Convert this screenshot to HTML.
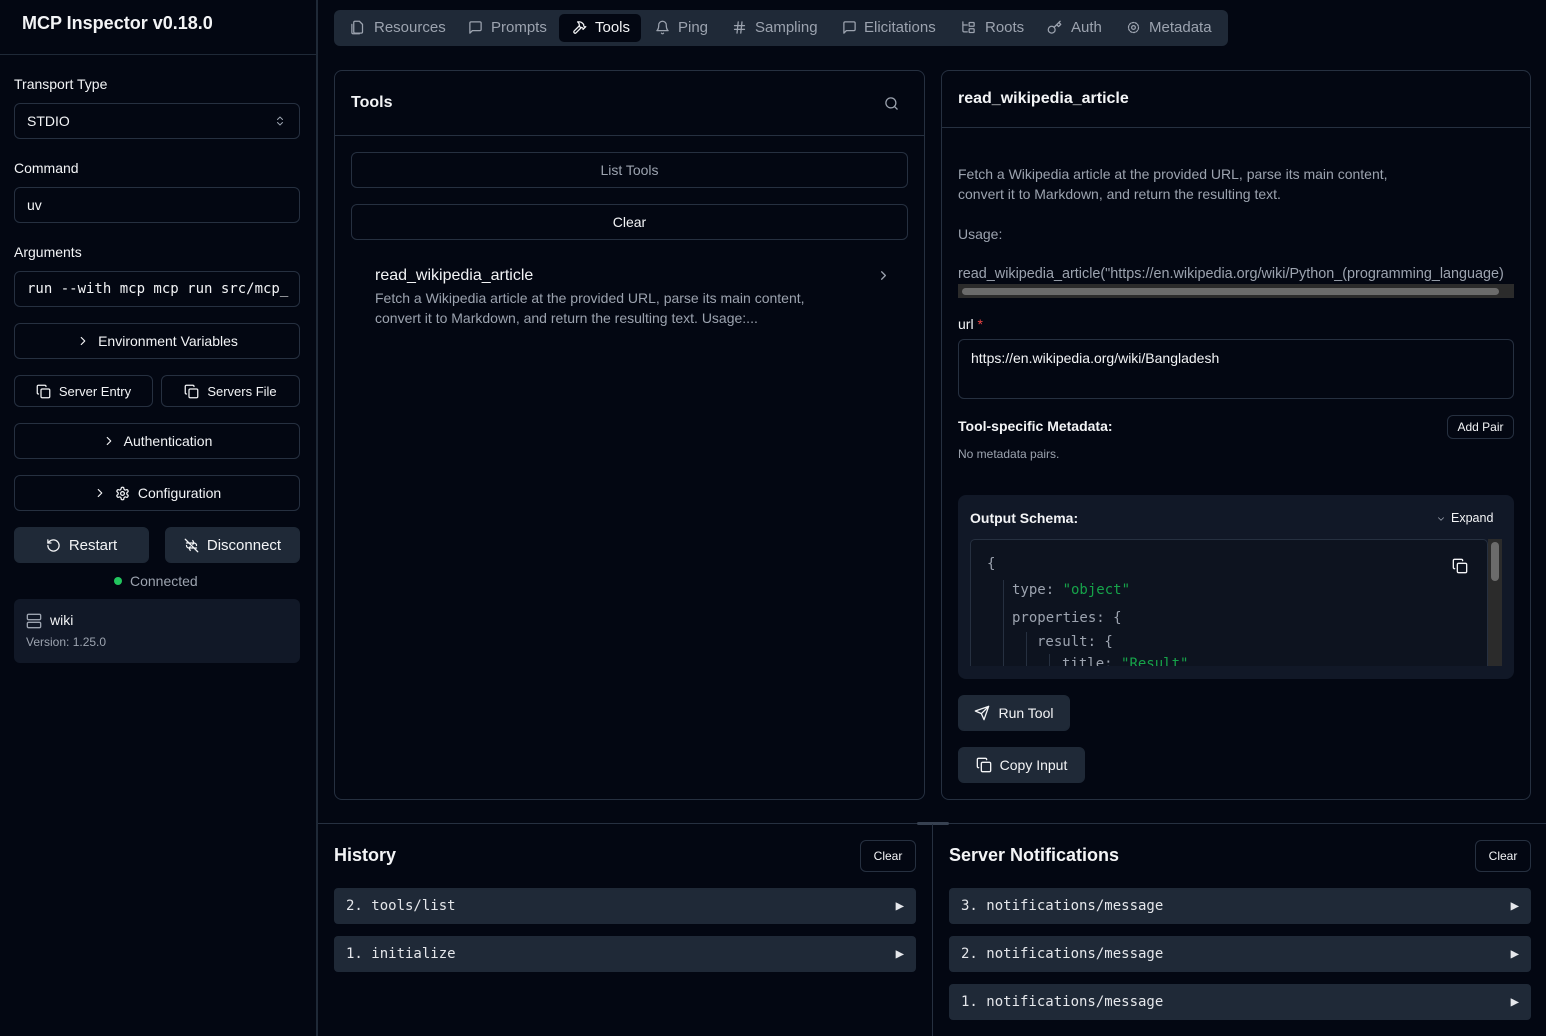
<!DOCTYPE html>
<html><head><meta charset="utf-8"><style>
*{box-sizing:border-box;margin:0;padding:0}
body{width:1546px;height:1036px;background:#030712;color:#f3f4f6;font-family:"Liberation Sans",sans-serif;font-size:14px;position:relative;overflow:hidden}
.a{position:absolute}
.mono{font-family:"DejaVu Sans Mono","Liberation Mono",monospace}
.bx{position:absolute;border:1px solid #263040;border-radius:6px}
.btn{position:absolute;border:1px solid #263040;border-radius:6px;display:flex;align-items:center;justify-content:center;gap:8px;font-size:14px;color:#f3f4f6}
.fill{background:#1f2937;border-color:#1f2937}
svg{fill:none;stroke:currentColor;stroke-width:2;stroke-linecap:round;stroke-linejoin:round}
.lbl{position:absolute;font-size:14px;color:#f3f4f6}
.ti{position:absolute;top:20px;color:#9ca3af}
.tt{position:absolute;top:19px;color:#9ca3af;font-size:15px}
.row{position:absolute;background:#1f2937;border-radius:4px;height:36px;display:flex;align-items:center;justify-content:space-between;padding:0 12px;font-size:14px;color:#e5e7eb}
</style></head><body>
<!-- sidebar -->
<div class="a" style="left:316px;top:0;width:2px;height:1036px;background:#1f2937"></div>
<div class="a" style="left:0;top:54px;width:316px;height:1px;background:#1f2937"></div>
<div class="a" style="left:22px;top:13px;font-size:18px;font-weight:bold">MCP Inspector v0.18.0</div>
<div class="lbl" style="left:14px;top:76px">Transport Type</div>
<div class="bx" style="left:14px;top:103px;width:286px;height:36px"><span class="a" style="left:12px;top:9px">STDIO</span><svg class="a" style="left:259px;top:11px;color:#9ca3af" width="12" height="12" viewBox="0 0 24 24"><path d="m7 15 5 5 5-5M7 9l5-5 5 5"/></svg></div>
<div class="lbl" style="left:14px;top:160px">Command</div>
<div class="bx" style="left:14px;top:187px;width:286px;height:36px"><span class="a" style="left:12px;top:9px">uv</span></div>
<div class="lbl" style="left:14px;top:244px">Arguments</div>
<div class="bx" style="left:14px;top:271px;width:286px;height:36px;overflow:hidden"><span class="a mono" style="left:12px;top:9px;font-size:14px;white-space:nowrap">run --with mcp mcp run src/mcp_</span></div>
<div class="btn" style="left:14px;top:323px;width:286px;height:36px"><svg width="14" height="14" viewBox="0 0 24 24"><path d="m9 18 6-6-6-6"/></svg>Environment Variables</div>
<div class="btn" style="left:14px;top:375px;width:139px;height:32px;font-size:13px"><svg width="15" height="15" viewBox="0 0 24 24"><rect x="8" y="8" width="14" height="14" rx="2"/><path d="M4 16c-1.1 0-2-.9-2-2V4c0-1.1.9-2 2-2h10c1.1 0 2 .9 2 2"/></svg>Server Entry</div>
<div class="btn" style="left:161px;top:375px;width:139px;height:32px;font-size:13px"><svg width="15" height="15" viewBox="0 0 24 24"><rect x="8" y="8" width="14" height="14" rx="2"/><path d="M4 16c-1.1 0-2-.9-2-2V4c0-1.1.9-2 2-2h10c1.1 0 2 .9 2 2"/></svg>Servers File</div>
<div class="btn" style="left:14px;top:423px;width:286px;height:36px"><svg width="14" height="14" viewBox="0 0 24 24"><path d="m9 18 6-6-6-6"/></svg>Authentication</div>
<div class="btn" style="left:14px;top:475px;width:286px;height:36px"><svg width="14" height="14" viewBox="0 0 24 24"><path d="m9 18 6-6-6-6"/></svg><svg width="15" height="15" viewBox="0 0 24 24"><circle cx="12" cy="12" r="3"/><path d="M12.2 2h-.4a2 2 0 0 0-2 2v.2a2 2 0 0 1-1 1.7l-.4.3a2 2 0 0 1-2 0l-.2-.1a2 2 0 0 0-2.7.7l-.2.4a2 2 0 0 0 .7 2.7l.2.1a2 2 0 0 1 1 1.7v.5a2 2 0 0 1-1 1.700l-.2.1a2 2 0 0 0-.7 2.7l.2.4a2 2 0 0 0 2.7.7l.2-.1a2 2 0 0 1 2 0l.4.3a2 2 0 0 1 1 1.7v.2a2 2 0 0 0 2 2h.4a2 2 0 0 0 2-2v-.2a2 2 0 0 1 1-1.7l.4-.3a2 2 0 0 1 2 0l.2.1a2 2 0 0 0 2.7-.7l.2-.4a2 2 0 0 0-.7-2.7l-.2-.1a2 2 0 0 1-1-1.7v-.5a2 2 0 0 1 1-1.7l.2-.1a2 2 0 0 0 .7-2.7l-.2-.4a2 2 0 0 0-2.7-.7l-.2.1a2 2 0 0 1-2 0l-.4-.3a2 2 0 0 1-1-1.7V4a2 2 0 0 0-2-2z"/></svg>Configuration</div>
<div class="btn fill" style="left:14px;top:527px;width:135px;height:36px;font-size:15px"><svg width="15" height="15" viewBox="0 0 24 24"><path d="M3 12a9 9 0 1 0 9-9 9.8 9.8 0 0 0-6.7 2.7L3 8"/><path d="M3 3v5h5"/></svg>Restart</div>
<div class="btn fill" style="left:165px;top:527px;width:135px;height:36px;font-size:15px"><svg width="15" height="15" viewBox="0 0 24 24"><path d="M2 2l20 20M4 8h12a4 4 0 0 1 4 4M20 16H8a4 4 0 0 1-4-4M14 4l2 4-2 2M10 14l-2 2 2 4"/></svg>Disconnect</div>
<div class="a" style="left:114px;top:577px;width:8px;height:8px;border-radius:50%;background:#22c55e"></div>
<div class="a" style="left:130px;top:573px;color:#9ca3af">Connected</div>
<div class="a" style="left:14px;top:599px;width:286px;height:64px;background:#111827;border-radius:6px"></div>
<svg class="a" style="left:26px;top:613px;color:#9ca3af" width="16" height="16" viewBox="0 0 24 24"><rect x="2" y="2" width="20" height="8" rx="2"/><rect x="2" y="14" width="20" height="8" rx="2"/></svg>
<div class="a" style="left:50px;top:612px">wiki</div>
<div class="a" style="left:26px;top:635px;color:#9ca3af;font-size:12px">Version: 1.25.0</div>

<!-- tabs -->
<div class="a" style="left:334px;top:10px;width:894px;height:36px;background:#1f2937;border-radius:6px"></div>
<div class="a" style="left:559px;top:14px;width:82px;height:28px;background:#030712;border-radius:5px"></div>
<svg class="ti" style="left:350px" width="15" height="15" viewBox="0 0 24 24"><path d="M8 21h10a2 2 0 0 0 2-2V7l-5-5H8a2 2 0 0 0-2 2v15a2 2 0 0 0 2 2z"/><path d="M3 7v13a2 2 0 0 0 2 2h10"/></svg><span class="tt" style="left:374px">Resources</span>
<svg class="ti" style="left:468px" width="15" height="15" viewBox="0 0 24 24"><path d="M21 15a2 2 0 0 1-2 2H7l-4 4V5a2 2 0 0 1 2-2h14a2 2 0 0 1 2 2z"/></svg><span class="tt" style="left:491px">Prompts</span>
<svg class="ti" style="left:572px;color:#f3f4f6" width="15" height="15" viewBox="0 0 24 24"><path d="m15 12-8.5 8.5a2.1 2.1 0 0 1-3-3L12 9M17.6 15 22 10.6M20.9 11.8l-1.3-1.3c-.6-.6-.9-1.4-.9-2.2V7.1l-2.3-2.3a6 6 0 0 0-4.2-1.8H9l.9.8a6.2 6.2 0 0 1 1.8 4.4V10l2 2h1.2c.8 0 1.6.3 2.2.9l1.3 1.3"/></svg><span class="tt" style="left:595px;color:#f3f4f6">Tools</span>
<svg class="ti" style="left:655px" width="15" height="15" viewBox="0 0 24 24"><path d="M6 8a6 6 0 0 1 12 0c0 7 3 9 3 9H3s3-2 3-9M10.3 21a1.9 1.9 0 0 0 3.4 0"/></svg><span class="tt" style="left:678px">Ping</span>
<svg class="ti" style="left:732px" width="15" height="15" viewBox="0 0 24 24"><path d="M4 9h16M4 15h16M10 3 8 21M16 3l-2 18"/></svg><span class="tt" style="left:755px">Sampling</span>
<svg class="ti" style="left:842px" width="15" height="15" viewBox="0 0 24 24"><path d="M21 15a2 2 0 0 1-2 2H7l-4 4V5a2 2 0 0 1 2-2h14a2 2 0 0 1 2 2z"/></svg><span class="tt" style="left:864px">Elicitations</span>
<svg class="ti" style="left:961px" width="15" height="15" viewBox="0 0 24 24"><path d="M3 3v14a2 2 0 0 0 2 2h5M3 8h7"/><rect x="13" y="4" width="8" height="6" rx="1"/><rect x="13" y="14" width="8" height="6" rx="1"/></svg><span class="tt" style="left:985px">Roots</span>
<svg class="ti" style="left:1047px" width="15" height="15" viewBox="0 0 24 24"><circle cx="7.5" cy="15.5" r="5.5"/><path d="m21 2-9.6 9.6M15.5 7.5l3 3L22 7l-3-3"/></svg><span class="tt" style="left:1071px">Auth</span>
<svg class="ti" style="left:1126px" width="15" height="15" viewBox="0 0 24 24"><circle cx="12" cy="12" r="3"/><circle cx="12" cy="12" r="8" stroke-dasharray="3 2"/></svg><span class="tt" style="left:1149px">Metadata</span>

<!-- tools panel -->
<div class="bx" style="left:334px;top:70px;width:591px;height:730px;border-radius:8px"></div>
<div class="a" style="left:335px;top:135px;width:589px;height:1px;background:#263040"></div>
<div class="a" style="left:351px;top:94px;font-size:16px;font-weight:bold">Tools</div>
<svg class="a" style="left:884px;top:96px;color:#9ca3af" width="15" height="15" viewBox="0 0 24 24"><circle cx="11" cy="11" r="8"/><path d="m21 21-4.3-4.3"/></svg>
<div class="btn" style="left:351px;top:152px;width:557px;height:36px;color:#9ca3af">List Tools</div>
<div class="btn" style="left:351px;top:204px;width:557px;height:36px">Clear</div>
<div class="a" style="left:375px;top:267px;font-size:16px">read_wikipedia_article</div>
<div class="a" style="left:375px;top:288px;color:#9ca3af;line-height:20px">Fetch a Wikipedia article at the provided URL, parse its main content,<br>convert it to Markdown, and return the resulting text. Usage:...</div>
<svg class="a" style="left:876px;top:268px;color:#9ca3af" width="15" height="15" viewBox="0 0 24 24"><path d="m9 18 6-6-6-6"/></svg>

<!-- detail panel -->
<div class="bx" style="left:941px;top:70px;width:590px;height:730px;border-radius:8px"></div>
<div class="a" style="left:942px;top:127px;width:588px;height:1px;background:#263040"></div>
<div class="a" style="left:958px;top:90px;font-size:16px;font-weight:bold">read_wikipedia_article</div>
<div class="a" style="left:958px;top:164px;color:#9ca3af;line-height:20px">Fetch a Wikipedia article at the provided URL, parse its main content,<br>convert it to Markdown, and return the resulting text.</div>
<div class="a" style="left:958px;top:226px;color:#9ca3af">Usage:</div>
<div class="a" style="left:958px;top:266px;color:#9ca3af;white-space:nowrap;width:556px;overflow:hidden;font-size:14.4px">read_wikipedia_article("https://en.wikipedia.org/wiki/Python_(programming_language)</div>
<div class="a" style="left:958px;top:284px;width:556px;height:14px;background:#2b2b2b"></div>
<div class="a" style="left:962px;top:288px;width:537px;height:7px;background:#6b6b6b;border-radius:4px"></div>
<div class="a" style="left:958px;top:316px">url <span style="color:#ef4444">*</span></div>
<div class="bx" style="left:958px;top:339px;width:556px;height:60px"><span class="a" style="left:12px;top:10px">https://en.wikipedia.org/wiki/Bangladesh</span></div>
<div class="a" style="left:958px;top:418px;font-weight:bold">Tool-specific Metadata:</div>
<div class="btn" style="left:1447px;top:415px;width:67px;height:24px;font-size:12px">Add Pair</div>
<div class="a" style="left:958px;top:447px;color:#9ca3af;font-size:12px">No metadata pairs.</div>
<div class="a" style="left:958px;top:495px;width:556px;height:184px;background:#111827;border-radius:8px"></div>
<div class="a" style="left:970px;top:510px;font-weight:bold">Output Schema:</div>
<svg class="a" style="left:1436px;top:514px;color:#9ca3af" width="10" height="10" viewBox="0 0 24 24"><path d="m6 9 6 6 6-6"/></svg>
<div class="a" style="left:1451px;top:511px;font-size:12.5px">Expand</div>
<div class="a" style="left:970px;top:539px;width:518px;height:127px;border:1px solid #263040;border-bottom:none;border-radius:5px 5px 0 0;overflow:hidden;background:#0d131f">
<div class="a mono" style="left:16px;top:16px;color:#9ca3af">{</div>
<div class="a mono" style="left:41px;top:42px;color:#9ca3af">type: <span style="color:#16a34a">"object"</span></div>
<div class="a mono" style="left:41px;top:70px;color:#9ca3af">properties: {</div>
<div class="a mono" style="left:66px;top:94px;color:#9ca3af">result: {</div>
<div class="a mono" style="left:91px;top:116px;color:#9ca3af">title: <span style="color:#16a34a">"Result"</span></div>
<div class="a" style="left:32px;top:40px;width:1px;height:90px;background:#263040"></div>
<div class="a" style="left:55px;top:92px;width:1px;height:40px;background:#263040"></div>
<div class="a" style="left:78px;top:114px;width:1px;height:20px;background:#263040"></div>
<svg class="a" style="left:481px;top:18px;color:#f3f4f6" width="16" height="16" viewBox="0 0 24 24"><rect x="8" y="8" width="14" height="14" rx="2"/><path d="M4 16c-1.1 0-2-.9-2-2V4c0-1.1.9-2 2-2h10c1.1 0 2 .9 2 2"/></svg>
</div>
<div class="a" style="left:1488px;top:539px;width:14px;height:127px;background:#2b2b2b"></div>
<div class="a" style="left:1491px;top:542px;width:8px;height:39px;background:#6b6b6b;border-radius:4px"></div>
<div class="btn fill" style="left:958px;top:695px;width:112px;height:36px"><svg width="16" height="16" viewBox="0 0 24 24"><path d="M22 2 11 13M22 2l-7 20-4-9-9-4z"/></svg>Run Tool</div>
<div class="btn fill" style="left:958px;top:747px;width:127px;height:36px"><svg width="16" height="16" viewBox="0 0 24 24"><rect x="8" y="8" width="14" height="14" rx="2"/><path d="M4 16c-1.1 0-2-.9-2-2V4c0-1.1.9-2 2-2h10c1.1 0 2 .9 2 2"/></svg>Copy Input</div>

<!-- bottom -->
<div class="a" style="left:318px;top:823px;width:1228px;height:1px;background:#263040"></div>
<div class="a" style="left:917px;top:822px;width:32px;height:3px;background:#374151;border-radius:2px"></div>
<div class="a" style="left:932px;top:824px;width:1px;height:212px;background:#263040"></div>
<div class="a" style="left:334px;top:845px;font-size:18px;font-weight:bold">History</div>
<div class="btn" style="left:860px;top:840px;width:56px;height:32px;font-size:12px">Clear</div>
<div class="row mono" style="left:334px;top:888px;width:582px">2. tools/list<span>▶</span></div>
<div class="row mono" style="left:334px;top:936px;width:582px">1. initialize<span>▶</span></div>
<div class="a" style="left:949px;top:845px;font-size:18px;font-weight:bold">Server Notifications</div>
<div class="btn" style="left:1475px;top:840px;width:56px;height:32px;font-size:12px">Clear</div>
<div class="row mono" style="left:949px;top:888px;width:582px">3. notifications/message<span>▶</span></div>
<div class="row mono" style="left:949px;top:936px;width:582px">2. notifications/message<span>▶</span></div>
<div class="row mono" style="left:949px;top:984px;width:582px">1. notifications/message<span>▶</span></div>
</body></html>
